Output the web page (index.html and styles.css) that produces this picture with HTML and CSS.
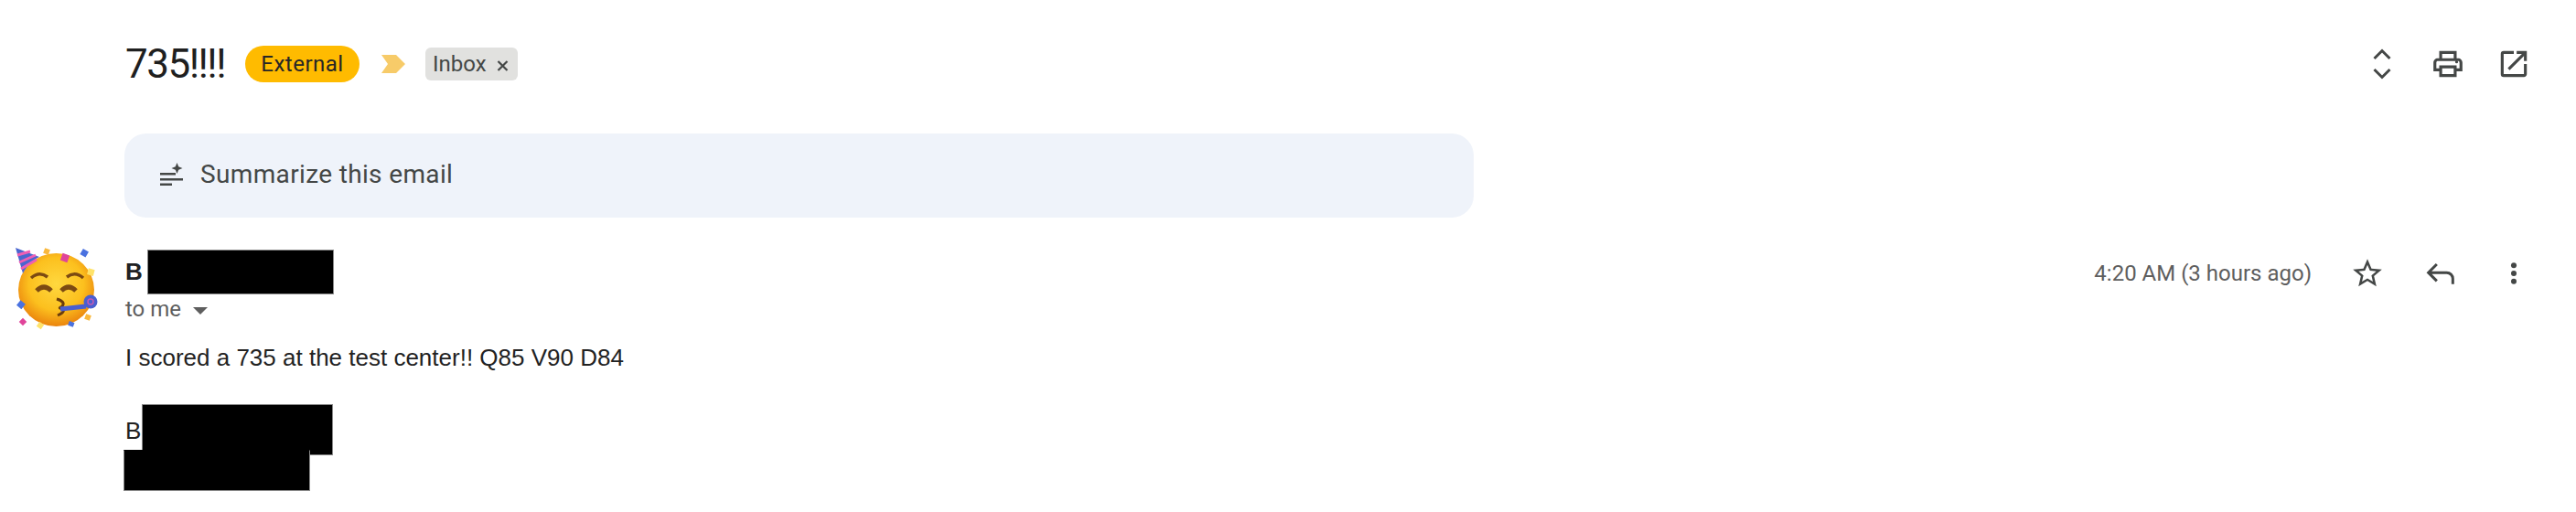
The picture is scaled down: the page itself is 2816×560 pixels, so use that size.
FILE: index.html
```html
<!DOCTYPE html>
<html lang="en">
<head>
    <meta charset="UTF-8">
    <title>735!!!!</title>
    <link rel="stylesheet" href="styles.css">
</head>
<body>
    <div class="subject-row">
        <h2 class="subject">735!!!!</h2>
        <span class="pill">External</span>
        <svg class="marker" viewBox="0 0 26 20"><path d="M0 0h16l10 10-10 10H0l7-10z"/></svg>
        <span class="chip">Inbox
            <svg class="chip-x" viewBox="0 0 13 12"><path d="M1.500 1 11.500 11M11.500 1 1.500 11"/></svg>
        </span>
        <div class="actions">
            <button class="icon-btn">
                <svg viewBox="0 0 38 38" class="icon chevrons"><path d="M10.500 13 19 4.500 27.500 13M10.500 25 19 33.500 27.500 25"/></svg>
            </button>
            <button class="icon-btn">
                <svg viewBox="0 0 24 24" class="icon"><path d="M19 8h-1V3H6v5H5c-1.660 0-3 1.340-3 3v6h4v4h12v-4h4v-6c0-1.660-1.340-3-3-3zM8 5h8v3H8V5zm8 12v2H8v-4h8v2zm2-2v-2H6v2H4v-4c0-.550.450-1 1-1h14c.550 0 1 .450 1 1v4h-2z"/><circle cx="18" cy="10.500" r="1"/></svg>
            </button>
            <button class="icon-btn">
                <svg viewBox="0 0 24 24" class="icon"><path d="M19 19H5V5h7V3H5a2 2 0 0 0-2 2v14a2 2 0 0 0 2 2h14c1.100 0 2-.900 2-2v-7h-2v7zM14 3v2h3.590l-9.830 9.830 1.410 1.410L19 6.410V10h2V3h-7z"/></svg>
            </button>
        </div>
    </div>

    <div class="summary">
        <svg class="summary-icon" viewBox="0 0 25 25"><path d="M0 11h17v2.500H0zM0 17h25v2.500H0zM0 22.500h13V25H0z"/><path d="M18.500 0l1.700 4.300 4.300 1.700-4.300 1.700-1.700 4.300-1.700-4.300-4.300-1.700 4.300-1.700z"/></svg>
        <span>Summarize this email</span>
    </div>

    <div class="message">
        <svg class="avatar" viewBox="0 0 120 110">
            <defs>
                <radialGradient id="face" cx="50%" cy="42%" r="60%">
                    <stop offset="0" stop-color="#ffd83f"/>
                    <stop offset="0.6" stop-color="#fcc01e"/>
                    <stop offset="1" stop-color="#e97f0c"/>
                </radialGradient>
            </defs>
            <ellipse cx="61.500" cy="57" rx="41.500" ry="40" fill="url(#face)"/>
            <path d="M17 11 43 21C35 25 29 31 25 39z" fill="#4a66cf"/>
            <path d="M19 19 33 15M21 27 39 19M23 34 40 24" stroke="#ee5fb4" stroke-width="3" fill="none"/>
            <path d="M34 44Q43 36 52 43M73 43Q82 36 91 44" stroke="#7c4a12" stroke-width="3.500" fill="none"/>
            <path d="M40 58Q48 50 56 58M67 58Q75 50 83 58" stroke="#7c4a12" stroke-width="5" fill="none"/>
            <path d="M62 67Q72 70 68 75 64 77 66 77 74 80 63 85" stroke="#6b3d0c" stroke-width="3" fill="none"/>
            <path d="M66 78 94 75" stroke="#4a5fcf" stroke-width="5"/>
            <circle cx="99" cy="70" r="7.500" fill="#4a5fcf"/>
            <circle cx="99" cy="70" r="3" fill="none" stroke="#c25bb5" stroke-width="1.500"/>
            <g>
                <rect x="67" y="18" width="8" height="8" transform="rotate(20 71 22)" fill="#e0449a"/>
                <rect x="89" y="13" width="7" height="7" transform="rotate(30 92 16)" fill="#4a72e0"/>
                <rect x="96" y="34" width="7" height="7" transform="rotate(15 99 37)" fill="#ffe36b"/>
                <rect x="19" y="70" width="7" height="7" transform="rotate(40 23 74)" fill="#4a72e0"/>
                <rect x="22" y="89" width="6" height="6" transform="rotate(45 25 92)" fill="#e0449a"/>
                <rect x="41" y="93" width="6" height="6" transform="rotate(35 44 96)" fill="#ffe36b"/>
                <rect x="93" y="84" width="6" height="6" transform="rotate(20 96 87)" fill="#f9b83c"/>
                <rect x="75" y="92" width="6" height="5" transform="rotate(20 78 94)" fill="#4a72e0"/>
                <rect x="48" y="12" width="6" height="6" transform="rotate(20 51 15)" fill="#f9b83c"/>
            </g>
        </svg>

        <div class="message-main">
            <div class="message-head">
                <div class="sender">
                    <div class="name-row"><strong>B</strong><span class="redact name-redact"></span></div>
                    <div class="to-row">to me <span class="caret"></span></div>
                </div>
                <div class="meta">
                    <span class="time">4:20 AM (3 hours ago)</span>
                    <button class="icon-btn wide">
                        <svg viewBox="0 0 24 24" class="icon"><path d="M22 9.240l-7.190-.620L12 2 9.190 8.630 2 9.240l5.460 4.730L5.820 21 12 17.270 18.180 21l-1.630-7.030L22 9.240zM12 15.400l-3.760 2.270 1-4.280-3.320-2.880 4.380-.380L12 6.100l1.710 4.040 4.380.380-3.320 2.880 1 4.280L12 15.400z"/></svg>
                    </button>
                    <button class="icon-btn wide">
                        <svg viewBox="0 0 24 24" class="icon reply"><path d="M9.500 6 4 11.500 9.500 17M4 11.500h12a4 4 0 0 1 4 4V19"/></svg>
                    </button>
                    <button class="icon-btn wide">
                        <svg viewBox="0 0 24 24" class="icon"><circle cx="12" cy="6.500" r="1.900"/><circle cx="12" cy="12" r="1.900"/><circle cx="12" cy="17.500" r="1.900"/></svg>
                    </button>
                </div>
            </div>

            <p class="body-line">I scored a 735 at the test center!! Q85 V90 D84</p>

            <div class="signature">
                <p class="body-line">B</p>
                <span class="redact sig-over"></span>
                <div class="redact sig-under"></div>
            </div>
        </div>
    </div>
</body>
</html>
```

FILE: styles.css
```css
* {
    box-sizing: border-box;
}

body {
    margin: 0;
    background: #fff;
    color: #202124;
    font-family: "Roboto", sans-serif;
}

p {
    margin: 0;
}

.subject-row {
    display: flex;
    align-items: center;
    height: 40px;
    margin-top: 50px;
    padding: 0 32px 0 137px;
}

.subject {
    width: 110px;
    margin: 0;
    font-size: 44px;
    font-weight: 400;
    letter-spacing: -1.5px;
    line-height: 40px;
    color: #1f1f1f;
}

.pill {
    display: flex;
    align-items: center;
    justify-content: center;
    width: 125px;
    height: 40px;
    margin-left: 21px;
    border-radius: 20px;
    background: #ffbb00;
    font-size: 24px;
    letter-spacing: 0.5px;
    color: #262626;
}

.marker {
    width: 26px;
    height: 20px;
    margin-left: 24px;
    fill: #f7cb69;
}

.chip {
    display: flex;
    align-items: center;
    height: 36px;
    margin-left: 22px;
    padding: 0 10px 0 8px;
    border-radius: 6px;
    background: #e1e1df;
    font-size: 24px;
    color: #444746;
}

.chip-x {
    width: 13px;
    height: 12px;
    margin-left: 11px;
    margin-top: 3px;
    fill: none;
    stroke: #444746;
    stroke-width: 2.2;
}

.actions {
    display: flex;
    margin-left: auto;
}

.icon-btn {
    display: flex;
    align-items: center;
    justify-content: center;
    width: 72px;
    height: 40px;
    padding: 0;
    border: none;
    background: none;
}

.icon-btn.wide {
    width: 80px;
}

.icon {
    width: 38px;
    height: 38px;
    fill: #444746;
}

.icon.chevrons {
    fill: none;
    stroke: #444746;
    stroke-width: 3;
}

.icon.reply {
    width: 40px;
    height: 40px;
    fill: none;
    stroke: #444746;
    stroke-width: 1.8;
}

.summary {
    display: flex;
    align-items: center;
    width: 1475px;
    height: 92px;
    margin: 56px 0 0 136px;
    padding: 0 0 3px 39px;
    border-radius: 24px;
    background: #eff3fa;
    font-size: 28px;
    letter-spacing: 0.35px;
    color: #444746;
}

.summary-icon {
    width: 25px;
    height: 25px;
    margin-right: 19px;
    fill: #444746;
}

.message {
    display: flex;
    margin-top: 22px;
}

.avatar {
    flex: none;
    width: 120px;
    height: 110px;
}

.message-main {
    flex: 1;
    padding: 13px 28px 0 17px;
}

.message-head {
    display: flex;
    justify-content: space-between;
}

.name-row {
    display: flex;
    align-items: flex-end;
    height: 49px;
    font-size: 26px;
    line-height: 33px;
    font-family: "Liberation Sans", sans-serif;
}

.name-row strong {
    align-self: flex-start;
    margin-top: 8px;
}

.redact {
    display: block;
    background: #000;
    border: 1px solid #888;
}

.name-redact {
    width: 204px;
    height: 49px;
    margin-left: 5px;
}

.to-row {
    display: flex;
    align-items: center;
    height: 32px;
    font-size: 24px;
    color: #5e5e5e;
}

.caret {
    width: 0;
    height: 0;
    margin: 3px 0 0 13px;
    border-top: 8px solid #5e5e5e;
    border-left: 8px solid transparent;
    border-right: 8px solid transparent;
}

.meta {
    display: flex;
    align-items: center;
    height: 40px;
    margin-top: 6px;
}

.time {
    margin-right: 21px;
    font-size: 24px;
    color: #5e5e5e;
}

.body-line {
    margin-top: 19px;
    font-family: "Liberation Sans", sans-serif;
    font-size: 26px;
    line-height: 36px;
    color: #222;
}

.signature {
    position: relative;
    margin-top: 44px;
}

.signature .body-line {
    margin-top: 0;
}

.sig-over {
    position: absolute;
    top: -11px;
    left: 18px;
    width: 209px;
    height: 56px;
}

.sig-under {
    position: relative;
    z-index: 1;
    width: 204px;
    height: 45px;
    margin: 3px 0 0 -2px;
    border-top-color: #000;
}
```
